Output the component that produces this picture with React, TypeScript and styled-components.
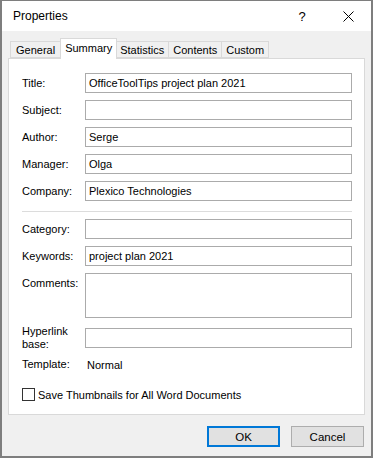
import React from 'react'
import styled, { createGlobalStyle } from 'styled-components'

const GlobalStyle = createGlobalStyle`
  html, body {
    margin: 0;
    padding: 0;
    background: #ffffff;
  }
  body {
    font-family: 'Liberation Sans', Arial, sans-serif;
    font-size: 11px;
    color: #000000;
  }
`

const Window = styled.div`
  box-sizing: border-box;
  width: 373px;
  height: 458px;
  border: 2px solid #7e7e7e;
  border-top-width: 1px;
  background: #f0f0f0;
  display: flex;
  flex-direction: column;
`

const TitleBar = styled.div`
  height: 30px;
  background: #ffffff;
  display: flex;
  align-items: center;
  padding-left: 11px;
  flex-shrink: 0;
`

const Caption = styled.div`
  flex: 1;
  font-size: 12px;
`

const TitleButton = styled.div`
  width: 46px;
  height: 30px;
  display: flex;
  align-items: center;
  justify-content: center;
  font-size: 13px;
`

const Body = styled.div`
  flex: 1;
  display: flex;
  flex-direction: column;
  padding: 7px 6px 0 6px;
`

const TabStrip = styled.div`
  display: flex;
  align-items: flex-end;
  height: 20px;
  padding-left: 2px;
  position: relative;
  z-index: 1;
`

const Tab = styled.div<{ $active?: boolean }>`
  box-sizing: border-box;
  height: ${(p) => (p.$active ? '21px' : '17px')};
  padding: ${(p) => (p.$active ? '2px 4px 0' : '1px 4px 0')};
  margin: ${(p) => (p.$active ? '0 -1px -1px -1px' : '0')};
  background: ${(p) => (p.$active ? '#ffffff' : '#f0f0f0')};
  border: 1px solid #d9d9d9;
  border-bottom: ${(p) => (p.$active ? 'none' : '1px solid #d9d9d9')};
  border-left: ${(p) => (p.$active ? '1px solid #d9d9d9' : 'none')};
  position: relative;
  z-index: ${(p) => (p.$active ? 2 : 1)};
  line-height: 14px;
  &:first-child {
    border-left: 1px solid #d9d9d9;
    padding: 1px 5px 0;
  }
`

const Panel = styled.div`
  box-sizing: border-box;
  height: 357px;
  background: #ffffff;
  border: 1px solid #d9d9d9;
  padding: 14px 12px 0 13px;
  display: flex;
  flex-direction: column;
`

const Row = styled.div<{ $top?: boolean; $gap?: number }>`
  display: flex;
  align-items: ${(p) => (p.$top ? 'flex-start' : 'center')};
  margin-bottom: ${(p) => p.$gap ?? 7}px;
`

const Label = styled.div<{ $pad?: number }>`
  width: 63px;
  flex-shrink: 0;
  line-height: 13px;
  padding-top: ${(p) => p.$pad ?? 0}px;
`

const Field = styled.div<{ $tall?: boolean }>`
  box-sizing: border-box;
  flex: 1;
  height: ${(p) => (p.$tall ? '45px' : '20px')};
  border: 1px solid #ababab;
  padding: 2px 3px 0;
  line-height: 15px;
  white-space: nowrap;
`

const Separator = styled.div`
  height: 1px;
  background: #dcdcdc;
  margin: 3px 0 7px;
`

const Value = styled.div`
  padding-left: 2px;
`

const CheckRow = styled.label`
  display: flex;
  align-items: center;
  gap: 3px;
  margin-top: 17px;
`

const Box = styled.span`
  box-sizing: border-box;
  width: 13px;
  height: 13px;
  border: 1px solid #333333;
  background: #ffffff;
`

const Footer = styled.div`
  display: flex;
  justify-content: flex-end;
  gap: 11px;
  padding: 11px 1px 0 0;
`

const Button = styled.div<{ $default?: boolean }>`
  box-sizing: border-box;
  width: 73px;
  height: 21px;
  background: #e1e1e1;
  border: ${(p) => (p.$default ? '2px solid #0078d7' : '1px solid #adadad')};
  display: flex;
  align-items: center;
  justify-content: center;
  font-size: 11.5px;
`

const fields: { label: string; value?: string }[] = [
  { label: 'Title:', value: 'OfficeToolTips project plan 2021' },
  { label: 'Subject:' },
  { label: 'Author:', value: 'Serge' },
  { label: 'Manager:', value: 'Olga' },
  { label: 'Company:', value: 'Plexico Technologies' },
]

const tabs = ['General', 'Summary', 'Statistics', 'Contents', 'Custom']

export default function App() {
  return (
    <>
      <GlobalStyle />
      <Window>
        <TitleBar>
          <Caption>Properties</Caption>
          <TitleButton>?</TitleButton>
          <TitleButton>
            <svg width="11" height="11" viewBox="0 0 11 11">
              <path d="M0.5 0.5 L10.5 10.5 M10.5 0.5 L0.5 10.5" stroke="#000" strokeWidth="1" />
            </svg>
          </TitleButton>
        </TitleBar>
        <Body>
          <TabStrip>
            {tabs.map((t) => (
              <Tab key={t} $active={t === 'Summary'}>
                {t}
              </Tab>
            ))}
          </TabStrip>
          <Panel>
            {fields.map((f) => (
              <Row key={f.label}>
                <Label>{f.label}</Label>
                <Field>{f.value}</Field>
              </Row>
            ))}
            <Separator />
            <Row>
              <Label>Category:</Label>
              <Field />
            </Row>
            <Row>
              <Label>Keywords:</Label>
              <Field>project plan 2021</Field>
            </Row>
            <Row $top $gap={7}>
              <Label $pad={4}>Comments:</Label>
              <Field $tall />
            </Row>
            <Row $gap={7}>
              <Label>
                Hyperlink
                <br />
                base:
              </Label>
              <Field />
            </Row>
            <Row $gap={0}>
              <Label>Template:</Label>
              <Value>Normal</Value>
            </Row>
            <CheckRow>
              <Box />
              Save Thumbnails for All Word Documents
            </CheckRow>
          </Panel>
          <Footer>
            <Button $default>OK</Button>
            <Button>Cancel</Button>
          </Footer>
        </Body>
      </Window>
    </>
  )
}
